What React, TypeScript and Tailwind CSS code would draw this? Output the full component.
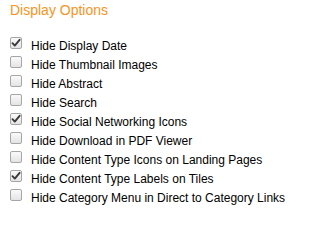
import React from "react";

const items: { label: string; checked: boolean }[] = [
  { label: "Hide Display Date", checked: true },
  { label: "Hide Thumbnail Images", checked: false },
  { label: "Hide Abstract", checked: false },
  { label: "Hide Search", checked: false },
  { label: "Hide Social Networking Icons", checked: true },
  { label: "Hide Download in PDF Viewer", checked: false },
  { label: "Hide Content Type Icons on Landing Pages", checked: false },
  { label: "Hide Content Type Labels on Tiles", checked: true },
  { label: "Hide Category Menu in Direct to Category Links", checked: false },
];

function Box({ checked }: { checked: boolean }) {
  return (
    <div className="w-[12px] h-[12px] shrink-0 rounded-[2px] border border-[#a6a6a6] bg-gradient-to-b from-[#fafafa] to-[#e4e4e4] flex items-center justify-center">
      {checked && (
        <svg width="10" height="10" viewBox="0 0 10 10">
          <path d="M1.5 5.2 L3.8 7.6 L8.6 1.8" fill="none" stroke="#3a3a3a" strokeWidth="1.9" strokeLinecap="round" strokeLinejoin="round" />
        </svg>
      )}
    </div>
  );
}

export default function App() {
  return (
    <div className="w-[292px] h-[207px] bg-white pl-[10px] pt-[2px] font-['Liberation_Sans',Arial,sans-serif] overflow-hidden">
      <div className="text-[14px] leading-[17px] text-[#f7941d]">Display Options</div>
      <div className="mt-[18px] flex flex-col">
        {items.map((it) => (
          <div key={it.label} className="flex items-start h-[19px]">
            <div className="pt-[0px]">
              <Box checked={it.checked} />
            </div>
            <span className="ml-[9px] text-[12px] leading-[19px] text-black whitespace-nowrap -mt-[0px]">
              {it.label}
            </span>
          </div>
        ))}
      </div>
    </div>
  );
}
